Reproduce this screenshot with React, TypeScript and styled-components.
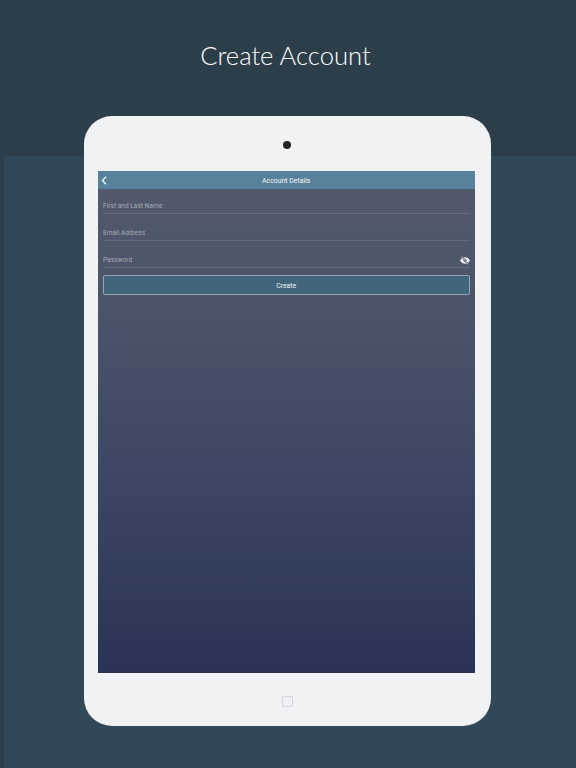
import React from "react";
import styled, { createGlobalStyle } from "styled-components";

const Global = createGlobalStyle`
  html, body { margin: 0; padding: 0; background: #2d3e4b; }
  #root { width: 576px; height: 768px; }
`;

const Page = styled.div`
  position: relative;
  width: 576px;
  height: 768px;
  overflow: hidden;
  background: #2d3e4b;
  display: flex;
  flex-direction: column;
  align-items: flex-start;
  &::before {
    content: "";
    position: absolute;
    left: 4px;
    top: 156px;
    right: 0;
    bottom: 0;
    background: #314858;
  }
`;

const Title = styled.h1`
  position: relative;
  width: 100%;
  height: 116px;
  margin: 0;
  padding: 38px 5px 0 0;
  box-sizing: border-box;
  text-align: center;
  font-family: Lato, "Liberation Sans", sans-serif;
  font-weight: 300;
  font-size: 25.6px;
  line-height: 34px;
  color: #ffffff;
`;

const Device = styled.div`
  position: relative;
  margin-left: 84px;
  width: 407px;
  height: 610px;
  border-radius: 28px;
  background: #f1f2f4;
  box-sizing: border-box;
  padding: 25px 16px 0 13.5px;
  display: flex;
  flex-direction: column;
  align-items: stretch;
`;

const Camera = styled.div`
  width: 8px;
  height: 8px;
  border-radius: 50%;
  background: #232426;
  align-self: center;
  margin: 0 0 22px 1.5px;
`;

const Screen = styled.div`
  height: 502px;
  background: linear-gradient(180deg, #535a6c 0%, #4b5369 30%, #3c4663 62%, #2a3355 100%);
  display: flex;
  flex-direction: column;
`;

const NavBar = styled.div`
  position: relative;
  height: 18px;
  flex: none;
  box-sizing: border-box;
  padding-top: 1px;
  background: #58829c;
  display: flex;
  align-items: center;
  justify-content: center;
  color: #f4f6f7;
  font-family: Roboto, "Liberation Sans", sans-serif;
  font-weight: 400;
  font-size: 6.9px;
`;

const Back = styled.svg`
  position: absolute;
  left: 3px;
  top: 5px;
  width: 6px;
  height: 9px;
`;

const Form = styled.div`
  padding: 0 5.5px;
  display: flex;
  flex-direction: column;
`;

const Field = styled.div`
  position: relative;
  height: 27px;
  box-sizing: border-box;
  border-bottom: 1px solid #656b7c;
  padding-bottom: 3.5px;
  display: flex;
  align-items: flex-end;
  color: #a5a9b2;
  font-family: Roboto, "Liberation Sans", sans-serif;
  font-size: 6.6px;
  line-height: 8px;
  &:first-child {
    height: 25px;
  }
`;

const Eye = styled.svg`
  position: absolute;
  right: 0;
  bottom: 2px;
  width: 10px;
  height: 9px;
`;

const Create = styled.button`
  margin-top: 7px;
  height: 20px;
  padding: 1px 0 0;
  border: 1px solid #8fa8b4;
  border-radius: 2px;
  background: #41657a;
  color: #f2f4f5;
  font-family: Roboto, "Liberation Sans", sans-serif;
  font-weight: 400;
  font-size: 6.9px;
`;

const Home = styled.div`
  width: 11px;
  height: 11px;
  box-sizing: border-box;
  border: 1px solid #d3d5d8;
  border-radius: 2px;
  align-self: center;
  margin: 23px 0 0 1.5px;
`;

export default function App() {
  return (
    <Page>
      <Global />
      <Title>Create Account</Title>
      <Device>
        <Camera />
        <Screen>
          <NavBar>
            <Back viewBox="0 0 6 9">
              <path d="M5 .8 1.4 4.5 5 8.2" fill="none" stroke="#f4f6f7" strokeWidth="1.3" />
            </Back>
            Account Details
          </NavBar>
          <Form>
            <Field>First and Last Name</Field>
            <Field>Email Address</Field>
            <Field>
              Password
              <Eye viewBox="0 0 10 9">
                <path d="M0 4.5C1.3 2.3 3 1.2 5 1.2s3.7 1.1 5 3.3C8.7 6.7 7 7.8 5 7.8S1.3 6.7 0 4.5Z" fill="#eceef0" />
                <circle cx="5" cy="4.5" r="1.5" fill="#50566a" />
                <path d="M1.8 .6 8.2 8.4" stroke="#50566a" strokeWidth="1.6" />
                <path d="M1.8 .6 8.2 8.4" stroke="#eceef0" strokeWidth=".7" />
              </Eye>
            </Field>
            <Create>Create</Create>
          </Form>
        </Screen>
        <Home />
      </Device>
    </Page>
  );
}
